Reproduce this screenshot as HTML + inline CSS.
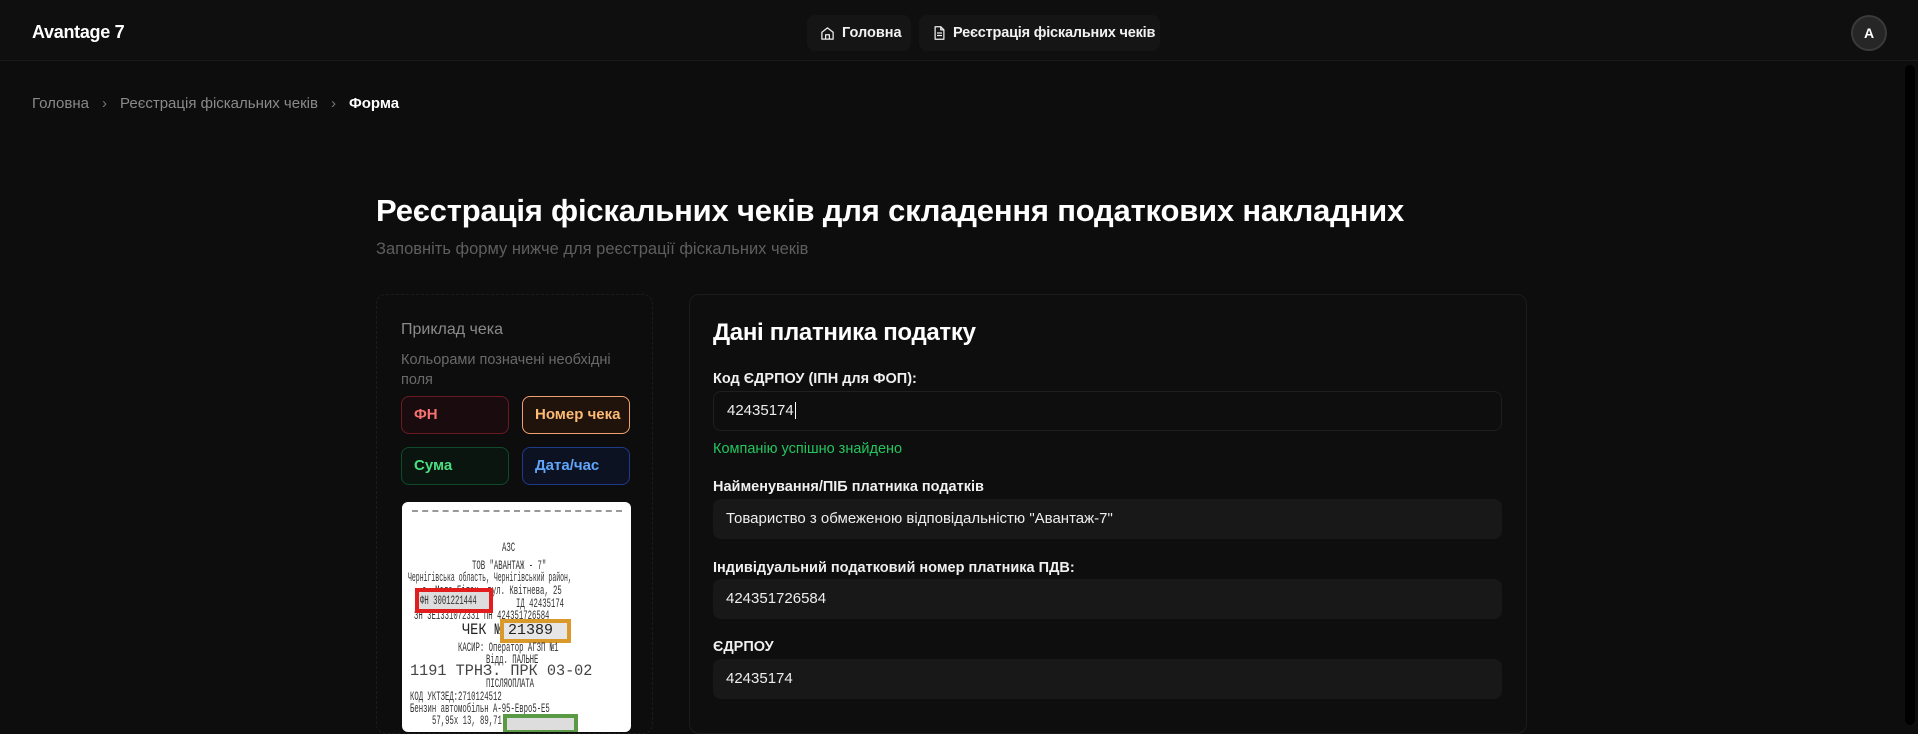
<!DOCTYPE html>
<html><head><meta charset="utf-8"><style>
*{box-sizing:border-box;margin:0;padding:0}
body{width:1918px;height:723px;overflow:hidden;background:#0d0d0d;font-family:"Liberation Sans","Noto Sans CJK SC",sans-serif;color:#fff;position:relative}
.abs{position:absolute;white-space:nowrap}
.hdr{position:absolute;left:0;top:0;width:1918px;height:61px;background:#0f0f0f;border-bottom:1px solid #1a1a1a}
.pill{position:absolute;top:15px;height:36px;background:#151515;border-radius:8px;font-size:14.5px;font-weight:bold;line-height:36px;color:#f2f2f2;white-space:nowrap}
.chip{position:absolute;width:108px;height:38px;border-radius:8px;font-size:15px;font-weight:bold;line-height:36px;padding-left:12px;border:1px solid;white-space:nowrap}
.lbl{position:absolute;left:713px;font-size:14.5px;font-weight:bold;color:#f0f0f0;white-space:nowrap}
.inp{position:absolute;left:713px;width:789px;height:40px;border-radius:8px;background:#181818;font-size:15px;line-height:40px;padding-left:13px;color:#eee;white-space:nowrap}
.r{position:absolute;font-family:"Liberation Mono",monospace;color:#333;white-space:nowrap;transform-origin:left center;font-size:13px;transform:scaleX(.56)}
</style></head><body>
<div class="hdr"></div>
<div class="abs" style="left:32px;top:22px;font-size:18px;font-weight:bold;letter-spacing:-0.3px">Avantage 7</div>
<div class="pill" style="left:807px;width:104px;padding-left:13px">
<svg width="15" height="15" viewBox="0 0 24 24" style="position:absolute;left:13px;top:11px" fill="none" stroke="#eee" stroke-width="2" stroke-linejoin="round"><path d="M3 10l9-7 9 7v11H3z"/><path d="M9 21v-7h6v7"/></svg>
<span style="margin-left:22px">Головна</span></div>
<div class="pill" style="left:919px;width:241px;padding-left:13px">
<svg width="15" height="16" viewBox="0 0 24 24" style="position:absolute;left:13px;top:10px" fill="none" stroke="#eee" stroke-width="2" stroke-linejoin="round"><path d="M5 2h9l5 5v15H5z"/><path d="M14 2v5h5M8 12h8M8 16h8"/></svg>
<span style="margin-left:21px;letter-spacing:-0.2px">Реєстрація фіскальних чеків</span></div>
<div class="abs" style="left:1851px;top:15px;width:36px;height:36px;border-radius:50%;background:#262626;border:2px solid #3a3a3a;font-size:14px;font-weight:bold;text-align:center;line-height:32px">A</div>
<div class="abs" style="left:1905px;top:65px;width:10px;height:660px;background:#000;border-radius:5px"></div>

<div class="abs" style="left:32px;top:95px;font-size:15px;color:#8a8a8a">Головна<span style="margin:0 13px;color:#777">›</span>Реєстрація фіскальних чеків<span style="margin:0 13px;color:#777">›</span><span style="color:#fff;font-weight:bold">Форма</span></div>

<div class="abs" style="left:376px;top:193px;font-size:31px;font-weight:bold;letter-spacing:-0.2px">Реєстрація фіскальних чеків для складення податкових накладних</div>
<div class="abs" style="left:376px;top:240px;font-size:16.5px;color:#5e5e5e">Заповніть форму нижче для реєстрації фіскальних чеків</div>

<div class="abs" style="left:376px;top:294px;width:277px;height:440px;border:1px dashed #1c1c1c;border-radius:10px"></div>
<div class="abs" style="left:401px;top:321px;font-size:16px;color:#8a8a8a">Приклад чека</div>
<div class="abs" style="left:401px;top:350px;font-size:14.5px;color:#6a6a6a;line-height:20px">Кольорами позначені необхідні<br>поля</div>
<div class="chip" style="left:401px;top:396px;border-color:#6b1a24;background:#1a0c0e;color:#f87171">ФН</div>
<div class="chip" style="left:522px;top:396px;border-color:#f0a070;background:#1f130c;color:#fdba74">Номер чека</div>
<div class="chip" style="left:401px;top:447px;border-color:#0f4a2a;background:#0b1510;color:#4ade80">Сума</div>
<div class="chip" style="left:522px;top:447px;border-color:#1e3a8a;background:#0c1222;color:#60a5fa">Дата/час</div>

<div class="abs" style="left:402px;top:502px;width:229px;height:230px;background:#fff;border-radius:6px;overflow:hidden">
<div class="abs" style="left:10px;top:8px;width:210px;height:0;border-top:2px dashed #999"></div>
<div class="r" style="left:100px;top:38px">АЗС</div>
<div class="r" style="left:70px;top:56px">ТОВ "АВАНТАЖ - 7"</div>
<div class="r" style="left:6px;top:68px;transform:scaleX(.5)">Чернігівська область, Чернігівський район,</div>
<div class="r" style="left:20px;top:81px">с. Мала Бігач, вул. Квітнева, 25</div>
<div class="r" style="left:114px;top:94px">ІД 42435174</div>
<div class="r" style="left:12px;top:106px">ЗН 3Е1331072331     ПН 424351726584</div>
<div class="abs" style="left:13px;top:86px;width:78px;height:25px;border:4px solid #e11d1d;background:#ddd"></div>
<div class="r" style="left:18px;top:91px">ФН 3001221444</div>
<div class="r" style="left:60px;top:119px;font-size:16px;color:#222;transform:scaleX(.85)">ЧЕК №</div>
<div class="abs" style="left:98px;top:117px;width:71px;height:24px;border:4px solid #d99a2b;background:#e6e6e6"></div>
<div class="r" style="left:106px;top:120px;font-size:15px;color:#222;transform:none">21389</div>
<div class="r" style="left:56px;top:138px">КАСИР: Оператор АГЗП №1</div>
<div class="r" style="left:84px;top:150px">Відд. ПАЛЬНЕ</div>
<div class="r" style="left:8px;top:160px;font-size:16px;color:#444;transform:scaleX(.95)">1191 ТРНЗ. ПРК 03-02</div>
<div class="r" style="left:84px;top:174px">ПІСЛЯОПЛАТА</div>
<div class="r" style="left:8px;top:187px">КОД УКТЗЕД:2710124512</div>
<div class="r" style="left:8px;top:199px">Бензин автомобільн А-95-Евро5-Е5</div>
<div class="r" style="left:30px;top:211px">57,95х    13,         89,71-А</div>
<div class="abs" style="left:101px;top:212px;width:75px;height:20px;border:4px solid #5a9a45;background:#ddd"></div>
</div>

<div class="abs" style="left:689px;top:294px;width:838px;height:440px;border:1px solid #1c1c1c;border-radius:10px;background:#0e0e0e"></div>
<div class="abs" style="left:713px;top:319px;font-size:24px;font-weight:bold;letter-spacing:-0.3px">Дані платника податку</div>
<div class="lbl" style="top:371px">Код ЄДРПОУ (ІПН для ФОП):</div>
<div class="inp" style="top:391px;background:#0e0e0e;border:1px solid #1f1f1f;line-height:38px">42435174<span style="border-left:1px solid #fff;margin-left:1px"></span></div>
<div class="abs" style="left:713px;top:441px;font-size:14.5px;color:#22c55e">Компанію успішно знайдено</div>
<div class="lbl" style="top:479px">Найменування/ПІБ платника податків</div>
<div class="inp" style="top:499px">Товариство з обмеженою відповідальністю "Авантаж-7"</div>
<div class="lbl" style="top:560px">Індивідуальний податковий номер платника ПДВ:</div>
<div class="inp" style="top:579px">424351726584</div>
<div class="lbl" style="top:639px">ЄДРПОУ</div>
<div class="inp" style="top:659px">42435174</div>
</body></html>
